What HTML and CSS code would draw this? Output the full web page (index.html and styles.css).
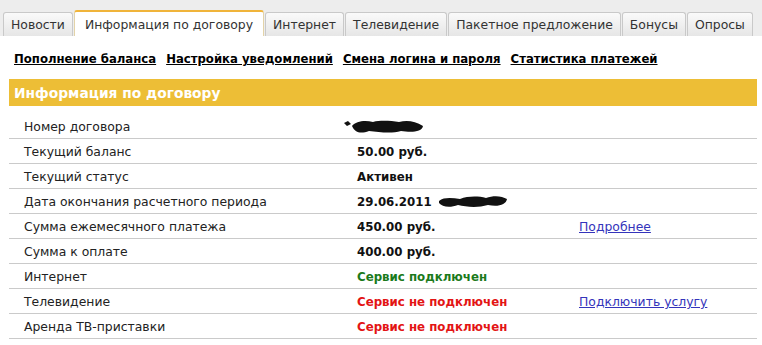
FILE: index.html
```html
<!DOCTYPE html>
<html lang="ru">
<head>
<meta charset="utf-8">
<link rel="stylesheet" href="styles.css">
</head>
<body>
<div class="tabbar">
  <div class="tab">Новости</div>
  <div class="tab active">Информация по договору</div>
  <div class="tab">Интернет</div>
  <div class="tab">Телевидение</div>
  <div class="tab">Пакетное предложение</div>
  <div class="tab">Бонусы</div>
  <div class="tab">Опросы</div>
</div>
<div class="content">
  <div class="sublinks">
    <a href="#">Пополнение баланса</a>
    <a href="#">Настройка уведомлений</a>
    <a href="#">Смена логина и пароля</a>
    <a href="#">Статистика платежей</a>
  </div>
  <div class="header">Информация по договору</div>
  <div class="rows">
    <div class="row"><span class="label">Номер договора</span><span class="value"><svg class="blot shift" width="82" height="16" viewBox="0 0 82 16"><path d="M1 4 L5 2 L8 5 L4 7 Z M9 7 C13 2 22 1 30 3 C38 1 48 2 56 3 C64 1 72 2 80 7 C79 14 66 13 58 12 C48 15 36 13 26 12 C18 15 12 14 9 7 Z" fill="#111"/></svg></span><span class="extra"></span></div>
    <div class="row"><span class="label">Текущий баланс</span><span class="value">50.00 руб.</span><span class="extra"></span></div>
    <div class="row"><span class="label">Текущий статус</span><span class="value">Активен</span><span class="extra"></span></div>
    <div class="row"><span class="label">Дата окончания расчетного периода</span><span class="value">29.06.2011 <svg class="blot" width="70" height="16" viewBox="0 0 70 16"><path d="M1 7 C6 3 14 4 22 5 C30 2 40 2 48 4 C56 1 64 2 69 5 C68 11 60 13 50 11 C40 14 28 13 20 11 C12 14 4 13 1 9 Z" fill="#111"/></svg></span><span class="extra"></span></div>
    <div class="row"><span class="label">Сумма ежемесячного платежа</span><span class="value">450.00 руб.</span><span class="extra"><a href="#">Подробнее</a></span></div>
    <div class="row"><span class="label">Сумма к оплате</span><span class="value">400.00 руб.</span><span class="extra"></span></div>
    <div class="row"><span class="label">Интернет</span><span class="value on">Сервис подключен</span><span class="extra"></span></div>
    <div class="row"><span class="label">Телевидение</span><span class="value off">Сервис не подключен</span><span class="extra"><a href="#">Подключить услугу</a></span></div>
    <div class="row"><span class="label">Аренда ТВ-приставки</span><span class="value off">Сервис не подключен</span><span class="extra"></span></div>
  </div>
</div>
</body>
</html>
```

FILE: styles.css
```css
html, body {
  margin: 0;
  padding: 0;
  background: #fff;
}
body {
  font-family: "DejaVu Sans", Verdana, sans-serif;
  font-size: 12.4px;
  color: #111;
}
.tabbar {
  display: flex;
  align-items: flex-end;
  gap: 1px;
  background: #ededed;
  height: 36px;
  padding-left: 3px;
  box-sizing: border-box;
}
.tab {
  white-space: nowrap;
  height: 24px;
  line-height: 23px;
  padding: 0 7px;
  background: linear-gradient(#fafafa, #e6e6e6);
  border: 1px solid #c9c9c9;
  border-bottom: none;
  border-radius: 3px 3px 0 0;
  color: #333;
  box-sizing: border-box;
}
.tab.active {
  background: #fff;
  height: 26px;
  line-height: 25px;
  border-top: 2px solid #f0b43a;
  border-color: #e3d3a8;
  border-top-color: #f0b43a;
  padding: 0 10px;
}
.content {
  padding: 0 5px 0 9px;
}
.sublinks {
  display: flex;
  gap: 10px;
  padding: 15px 0 0 5px;
  height: 28px;
  box-sizing: border-box;
  line-height: 16px;
  white-space: nowrap;
}
.sublinks a {
  color: #000;
  font-weight: bold;
  font-size: 11.7px;
  text-decoration: underline;
}
.header {
  margin-top: 15px;
  background: #edbe36;
  color: #fff;
  font-weight: bold;
  font-size: 13.8px;
  height: 27px;
  line-height: 28px;
  padding-left: 5px;
}
.rows {
  margin-top: 8px;
}
.row {
  display: grid;
  grid-template-columns: 333px 222px 1fr;
  height: 25px;
  line-height: 26px;
  border-bottom: 1px solid #cacaca;
  box-sizing: border-box;
  padding-left: 15px;
  white-space: nowrap;
}
.label {
  color: #222;
}
.value {
  font-weight: bold;
  font-size: 11.8px;
  display: flex;
  align-items: center;
  gap: 6px;
}
.value.on { color: #1b7a1b; }
.value.off { color: #e31414; }
.extra a {
  color: #3434bb;
  text-decoration: underline;
}
.blot { display: block; }
.blot.shift { margin-left: -14px; }
```
